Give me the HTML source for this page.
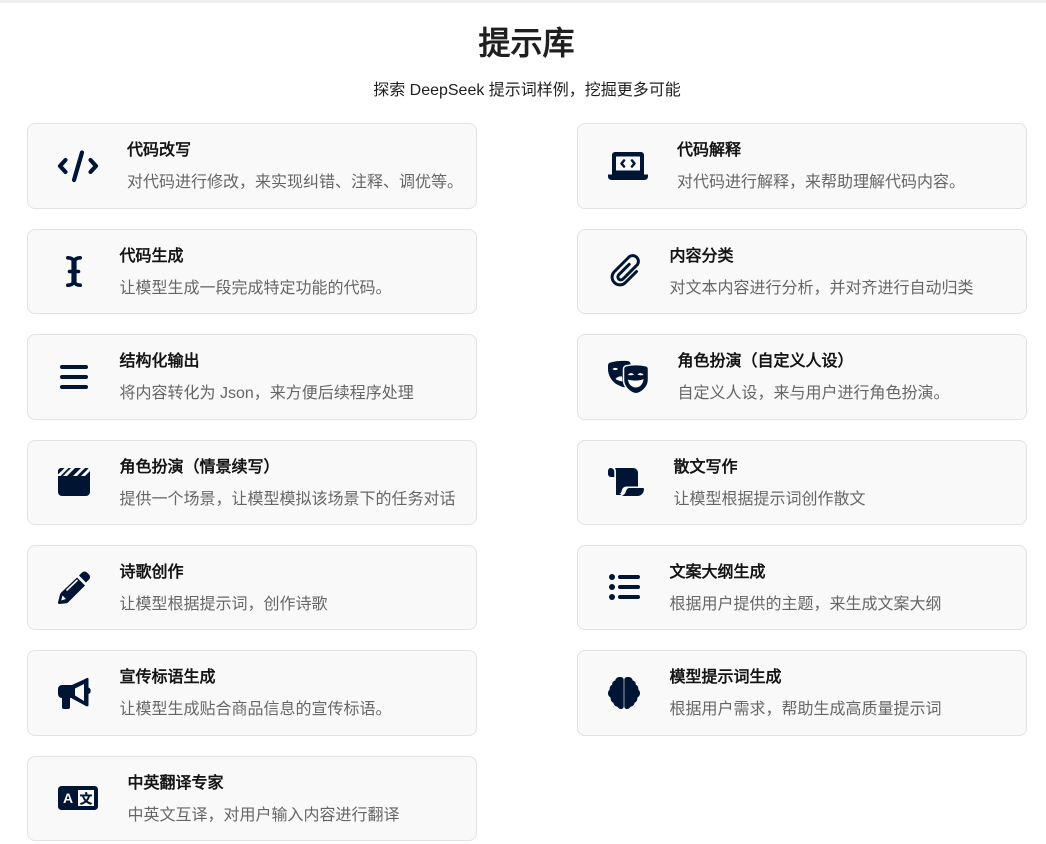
<!DOCTYPE html>
<html lang="zh"><head><meta charset="utf-8"><title>提示库</title>
<style>
html,body{margin:0;padding:0;background:#fff}
body{width:1046px;height:844px;position:relative;overflow:hidden;font-family:"Liberation Sans","WenQuanYi Zen Hei",sans-serif;color:#1a1a1a}
.top{position:absolute;left:0;top:0;width:1046px;height:3px;background:#eee}
h1{position:absolute;left:0;width:1053px;top:21px;margin:0;text-align:center;font-size:32px;line-height:44px;font-weight:700;color:#1f1f1f}
.sub{position:absolute;left:0;width:1054px;top:79px;text-align:center;font-size:16px;line-height:24px;color:#1f1f1f}
.c{position:absolute;width:448px;background:#f9f9f9;border:1px solid #e2e2e2;border-radius:8px}
.t,.d{position:absolute;white-space:nowrap;font-size:16px;line-height:24px}
.t{font-weight:700;color:#141414}
.d{color:#666}
svg{position:absolute;left:0;top:0}
</style></head><body>
<div class="top"></div>
<h1>提示库</h1>
<div class="sub">探索 DeepSeek 提示词样例，挖掘更多可能</div>

<div class="c" style="left:27px;top:123px;height:84px"></div>
<div class="c" style="left:27px;top:229px;height:83px"></div>
<div class="c" style="left:27px;top:334px;height:84px"></div>
<div class="c" style="left:27px;top:440px;height:83px"></div>
<div class="c" style="left:27px;top:545px;height:83px"></div>
<div class="c" style="left:27px;top:650px;height:84px"></div>
<div class="c" style="left:27px;top:756px;height:83px"></div>
<div class="c" style="left:577px;top:123px;height:84px"></div>
<div class="c" style="left:577px;top:229px;height:83px"></div>
<div class="c" style="left:577px;top:334px;height:84px"></div>
<div class="c" style="left:577px;top:440px;height:83px"></div>
<div class="c" style="left:577px;top:545px;height:83px"></div>
<div class="c" style="left:577px;top:650px;height:84px"></div>

<div class="t" style="left:127px;top:139px">代码改写</div><div class="d" style="left:127px;top:171px">对代码进行修改，来实现纠错、注释、调优等。</div>
<div class="t" style="left:119.500px;top:245px">代码生成</div><div class="d" style="left:119.500px;top:277px">让模型生成一段完成特定功能的代码。</div>
<div class="t" style="left:119.500px;top:350px">结构化输出</div><div class="d" style="left:119.500px;top:382px">将内容转化为 Json，来方便后续程序处理</div>
<div class="t" style="left:119.500px;top:456px">角色扮演（情景续写）</div><div class="d" style="left:119.500px;top:488px">提供一个场景，让模型模拟该场景下的任务对话</div>
<div class="t" style="left:119.500px;top:561px">诗歌创作</div><div class="d" style="left:119.500px;top:593px">让模型根据提示词，创作诗歌</div>
<div class="t" style="left:119.500px;top:666px">宣传标语生成</div><div class="d" style="left:119.500px;top:698px">让模型生成贴合商品信息的宣传标语。</div>
<div class="t" style="left:127.500px;top:772px">中英翻译专家</div><div class="d" style="left:127.500px;top:804px">中英文互译，对用户输入内容进行翻译</div>

<div class="t" style="left:677px;top:139px">代码解释</div><div class="d" style="left:677px;top:171px">对代码进行解释，来帮助理解代码内容。</div>
<div class="t" style="left:669.500px;top:245px">内容分类</div><div class="d" style="left:669.500px;top:277px">对文本内容进行分析，并对齐进行自动归类</div>
<div class="t" style="left:677.500px;top:350px">角色扮演（自定义人设）</div><div class="d" style="left:677.500px;top:382px">自定义人设，来与用户进行角色扮演。</div>
<div class="t" style="left:673.500px;top:456px">散文写作</div><div class="d" style="left:673.500px;top:488px">让模型根据提示词创作散文</div>
<div class="t" style="left:669.500px;top:561px">文案大纲生成</div><div class="d" style="left:669.500px;top:593px">根据用户提供的主题，来生成文案大纲</div>
<div class="t" style="left:669.500px;top:666px">模型提示词生成</div><div class="d" style="left:669.500px;top:698px">根据用户需求，帮助生成高质量提示词</div>

<svg width="1046" height="844" viewBox="0 0 1046 844" fill="#001533">
<!-- code -->
<g fill="none" stroke="#001533" stroke-width="4.200" stroke-linecap="round" stroke-linejoin="round">
<path d="M65.500 160l-5.500 6 5.500 6M90.500 160l5.500 6-5.500 6"/><path d="M82 152.500l-8 27.500"/>
</g>
<!-- i-cursor -->
<g fill="none" stroke="#001533" stroke-linecap="round">
<path stroke-width="3.600" d="M67.800 257.800c3 0 5 1 6.200 3.200 1.200-2.200 3.200-3.200 6.200-3.200M67.800 285.200c3 0 5-1 6.200-3.200 1.200 2.200 3.200 3.200 6.200 3.200"/>
<path stroke-width="5.200" stroke-linecap="butt" d="M74 260v23"/>
<path stroke-width="3.600" d="M69.500 271.500h9"/>
</g>
<!-- bars -->
<g fill="none" stroke="#001533" stroke-width="4" stroke-linecap="round">
<path d="M62 367h24M62 377h24M62 387h24"/>
</g>
<!-- clapperboard -->
<path d="M61 468h26a3 3 0 0 1 3 3v21a4 4 0 0 1-4 4H62a4 4 0 0 1-4-4v-21a3 3 0 0 1 3-3z"/>
<path fill="#f9f9f9" d="M58 474.500l6.500-6.500h4l-8 8H58zM71 468h4l-8 8h-4zM81 468h4l-8 8h-4zM90 469v2l-5 5h-4l8-8z"/>
<!-- pencil -->
<path d="M79 575.500l3-3a3.500 3.500 0 0 1 5 0l2 2a3.500 3.500 0 0 1 0 5l-3 3z"/>
<path d="M77 577.500l8 8L68.500 602c-.6.6-1.300 1-2 1.200L59.500 604c-1 .2-1.800-.7-1.500-1.700l2-7.800c.2-.7.6-1.400 1.100-1.900z"/>
<path fill="none" stroke="#f9f9f9" stroke-width="1.600" d="M66.500 590.500l11-10.500"/>
<path fill="#f9f9f9" d="M62.500 595.500l3.500 3.500-4.800 1.500z"/>
<!-- bullhorn -->
<path fill-rule="evenodd" d="M72 685l13-6c1.500-1 3.500-1.800 3.500 0v8.500a3.500 3.500 0 0 1 0 6.500v11c0 2-2 1.500-3.500 .5l-13-7zm3 3.500v7l9 5.500v-17z"/>
<path d="M62 685h11v13h-3v9a2 2 0 0 1-2 2h-4a2 2 0 0 1-2-2v-9a4 4 0 0 1-4-4v-5a4 4 0 0 1 4-4z"/>
<!-- language -->
<rect x="58" y="786" width="40" height="24" rx="3.500"/>
<rect x="78" y="790" width="16" height="16" fill="#f9f9f9"/>
<text x="68" y="803" text-anchor="middle" font-family="Liberation Sans,sans-serif" font-weight="700" font-size="14" fill="#f9f9f9">A</text>
<text x="86" y="803.500" text-anchor="middle" font-family="Noto Sans CJK SC,sans-serif" font-weight="900" font-size="13" fill="#001533">文</text>

<!-- laptop-code -->
<path fill-rule="evenodd" d="M615 152h26a3 3 0 0 1 3 3v20h-32v-20a3 3 0 0 1 3-3zm1 4.500v14h24v-14z"/>
<path d="M608 174.500h40v2a3.500 3.500 0 0 1-3.500 3.500h-33a3.500 3.500 0 0 1-3.500-3.500z"/>
<g fill="none" stroke="#001533" stroke-width="2.500" stroke-linecap="round" stroke-linejoin="round"><path d="M624 160.500l-2.500 3 2.500 3M632 160.500l2.500 3-2.500 3"/></g>
<!-- paperclip -->
<path fill="none" stroke="#001533" stroke-width="3" stroke-linecap="round" stroke-linejoin="round" d="M636.500 271.500l-11.500 11.500a7.800 7.800 0 0 1-11-11l15.500-15.500a5.800 5.800 0 0 1 8 8l-14.500 14.500a3 3 0 0 1-4.300-4.200l10.500-10.500"/>
<!-- masks -->
<path fill-rule="evenodd" d="M608 365.500c0-1.500 1-2.600 2.300-3 5-1.500 11-2 17-1.500 2 .2 3 1 3.500 3.500l-3 20c-1 3-3 3-5 2.500-3-1-5-2-7-3.200C611 380 608 375 608 369zM612.500 369c1.500 1.500 4 1.500 5.500 0-1.500-1.500-4-1.500-5.500 0zM615.500 379c1.500-2 4-3 6.500-2.500l.5 5c-2.500-.5-5-1-7-2.500z"/>
<path fill="#001533" stroke="#f9f9f9" stroke-width="1.500" fill-rule="evenodd" d="M623.500 369c0-1.700 1-2.800 2.500-3.200 6.500-1.600 13.500-1.600 20 0 1.500.4 2.500 1.500 2.500 3.200v11c0 7.500-7.500 13.200-12.500 13.800-5-.6-12.500-6.300-12.500-13.800z"/>
<path fill="#f9f9f9" d="M628 375c1-2.400 4.500-2.600 6-.4-1.800.7-4.200.9-6 .4zM637.500 374.600c1.500-2.200 5-2 6 .4-1.800.5-4.200.3-6-.4zM628 379.500c4 1.500 12 1.500 15.500-.5-.3 5-3.700 8.500-7.700 8.500s-7.500-3.500-7.800-8z"/>
<!-- scroll -->
<path d="M610.500 468c2 0 3.800 1.500 3.800 3.500v5.500h-3.500c-1.500 0-2.800-1.400-2.800-3v-3c0-1.500 1.100-3 2.500-3z"/>
<path d="M615 468h18c2.800 0 5 2.200 5 5v13.500h-11.500c-2.700 0-4.300 1.800-4.800 4.300-.3 1.700-1.200 2.800-2.700 2.900h2.500l-1 1.300h-3c-1.600 0-1.500 0-1.500-2V472c0-1.500-.5-3-1-4z"/>
<path d="M629 488h14c.6 0 1 .4 1 1 0 3.800-2.700 7-6.500 7H622c1.700-1 3.300-2.400 3.700-4 .4-1.700 1.700-4 3.300-4z"/>
<!-- list -->
<circle cx="612" cy="577" r="3"/><circle cx="612" cy="587" r="3"/><circle cx="612" cy="597" r="3"/>
<g fill="none" stroke="#001533" stroke-width="4" stroke-linecap="round"><path d="M620 577h18M620 587h18M620 597h18"/></g>
<!-- brain -->
<path d="M619.500 677c-2.300 0-3.800 1.500-4.300 3.500-2 .5-3.200 2.200-3 4.200-2 .8-2.800 2.800-2.500 4.800-1.100 1-1.900 2.600-1.700 4.300.2 1.800 1.100 3 2.700 3.900-.3 2.300.8 4.300 2.700 5 .6 2.300 2 3.800 4 3.900.8 1.500 2 2.400 3.600 2.400 1.500 0 2.700-1 2.700-2.800V680c0-1.800-1.200-3-3.200-3zM628.500 677c2.300 0 3.800 1.500 4.300 3.500 2 .5 3.200 2.200 3 4.200 2 .8 2.800 2.800 2.500 4.800 1.100 1 1.900 2.600 1.700 4.300-.2 1.800-1.100 3-2.700 3.900.3 2.300-.8 4.300-2.700 5-.6 2.300-2 3.800-4 3.900-.8 1.500-2 2.400-3.600 2.400-1.500 0-2.700-1-2.700-2.800V680c0-1.800 1.200-3 3.200-3z"/>
</svg>
</body></html>
